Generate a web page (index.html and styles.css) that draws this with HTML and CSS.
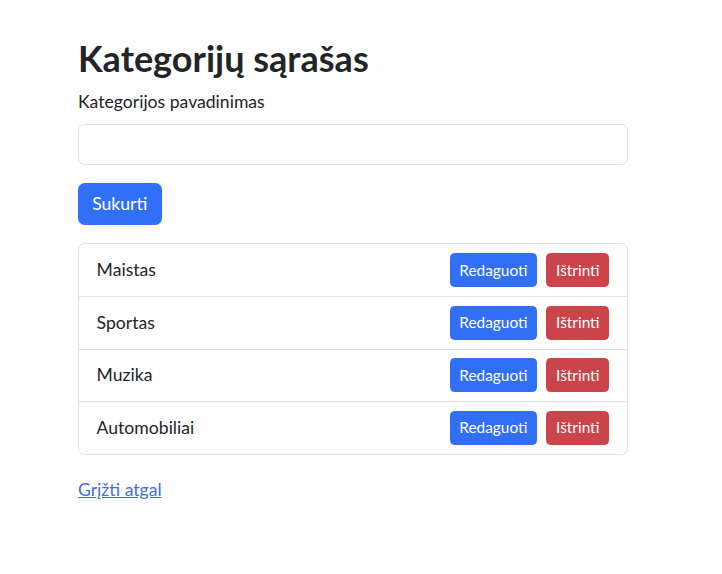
FILE: index.html
```html
<!DOCTYPE html>
<html lang="lt">
<head>
<meta charset="utf-8">
<title>Kategorijų sąrašas</title>
<link rel="stylesheet" href="styles.css">
</head>
<body>
<div class="container">
  <h1 class="title">Kategorijų sąrašas</h1>
  <form class="create-form">
    <label class="label" for="name">Kategorijos pavadinimas</label>
    <input class="input" id="name" type="text">
    <button type="button" class="btn btn-primary btn-create">Sukurti</button>
  </form>
  <ul class="list">
    <li class="item"><span class="item-name">Maistas</span><div class="actions"><button class="btn btn-primary btn-sm">Redaguoti</button><button class="btn btn-danger btn-sm">Ištrinti</button></div></li>
    <li class="item"><span class="item-name">Sportas</span><div class="actions"><button class="btn btn-primary btn-sm">Redaguoti</button><button class="btn btn-danger btn-sm">Ištrinti</button></div></li>
    <li class="item"><span class="item-name">Muzika</span><div class="actions"><button class="btn btn-primary btn-sm">Redaguoti</button><button class="btn btn-danger btn-sm">Ištrinti</button></div></li>
    <li class="item"><span class="item-name">Automobiliai</span><div class="actions"><button class="btn btn-primary btn-sm">Redaguoti</button><button class="btn btn-danger btn-sm">Ištrinti</button></div></li>
  </ul>
  <a href="#" class="back">Grįžti atgal</a>
</div>
</body>
</html>
```

FILE: styles.css
```css
html, body {
  margin: 0;
  padding: 0;
  background: #fff;
}
body {
  font-family: Lato, "Noto Sans", sans-serif;
  font-size: 17.6px;
  line-height: 1.5;
  color: #212529;
}
.container {
  width: 550px;
  margin-left: 78px;
  padding-top: 37px;
}
.title {
  margin: 0 0 9px 0;
  font-size: 36px;
  line-height: 43px;
  font-weight: 700;
}
.create-form {
  display: flex;
  flex-direction: column;
  align-items: flex-start;
}
.label {
  display: block;
  margin-bottom: 9px;
}
.input {
  box-sizing: border-box;
  width: 100%;
  height: 41px;
  border: 1px solid #dee2e6;
  border-radius: 6.6px;
  margin: 0 0 18px 0;
  padding: 6px 13px;
  font: inherit;
}
.btn {
  font-family: inherit;
  border: 1px solid transparent;
  color: #fff;
  cursor: pointer;
  line-height: 1.5;
}
.btn-primary {
  background: #316ff6;
  border-color: #316ff6;
}
.btn-danger {
  background: #cb444a;
  border-color: #cb444a;
}
.btn-create {
  font-size: 17.6px;
  height: 42px;
  padding: 0 13.2px;
  border-radius: 6.6px;
  margin-bottom: 18px;
}
.btn-sm {
  font-size: 15.4px;
  height: 34px;
  padding: 0 8.8px;
  border-radius: 4.4px;
}
.list {
  list-style: none;
  margin: 0;
  padding: 0;
  border: 1px solid #dee2e6;
  border-radius: 6.6px;
}
.item {
  display: flex;
  align-items: center;
  justify-content: space-between;
  padding: 8.8px 17.6px;
  min-height: 34px;
  border-bottom: 1px solid #dee2e6;
}
.item:last-child {
  border-bottom: none;
}
.actions {
  display: flex;
  gap: 9px;
}
.back {
  display: inline-block;
  margin-top: 22px;
  color: #3d6fe8;
  text-decoration: underline;
}
```
